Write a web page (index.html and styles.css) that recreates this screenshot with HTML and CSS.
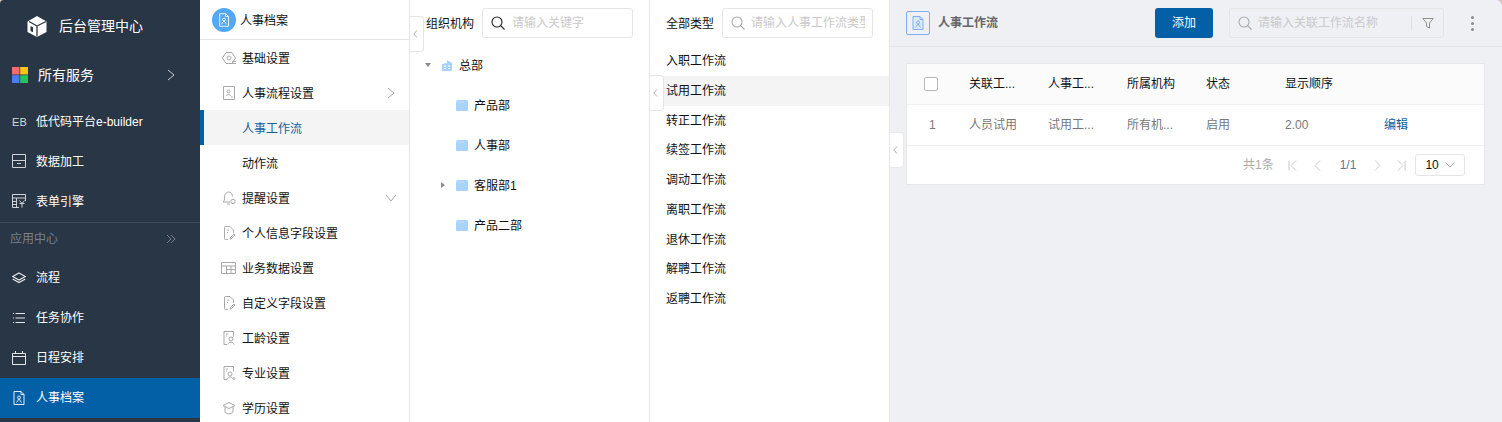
FILE: index.html
```html
<!DOCTYPE html>
<html lang="zh">
<head>
<meta charset="utf-8">
<title>人事工作流</title>
<link rel="stylesheet" href="styles.css">
</head>
<body>
<div class="app">
  <aside class="nav">
    <div class="brand">
      <svg class="brand-ico" viewBox="0 0 20 22"><path d="M10 .5 19.500 6v10.500L10 21.500.5 16.500V6z" fill="#fff"/><path d="M10 10.500 19 6M10 10.500V21M10 10.500 2 6" stroke="#283645" stroke-width="1.300" fill="none"/><path d="M3.500 10.500v5l2.500 1.300v-5z" fill="#283645"/></svg>
      <span>后台管理中心</span>
    </div>
    <div class="all">
      <svg class="all-ico" viewBox="0 0 16 16"><rect width="7.500" height="7.500" fill="#f56c6c"/><rect x="8.200" width="7.800" height="7.500" fill="#fcc419"/><rect y="8.200" width="7.500" height="7.800" fill="#4c7df0"/><rect x="8.200" y="8.200" width="7.800" height="7.800" fill="#22c55e"/></svg>
      <span class="all-text">所有服务</span>
      <svg class="chev" viewBox="0 0 8 12"><path d="M1 1l6 5-6 5" fill="none" stroke="#c8ced4" stroke-width="1"/></svg>
    </div>
    <div class="nav-item nav-first nt"><span class="eb">EB</span><span>低代码平台e-builder</span></div>
    <div class="nav-item nt">
      <svg class="ni" viewBox="0 0 14 14"><path d="M.5.500h13v13H.5zM.5 6.500h13M5 9.500h4" fill="none" stroke="#cfd3d8"/></svg>
      <span>数据加工</span>
    </div>
    <div class="nav-item nt">
      <svg class="ni" viewBox="0 0 14 14"><path d="M7 13.500H.5V.5h13V7M.5 4h13M4.500 4v9.500M.5 7.500h4M.5 10.500h4M7.500 6.500l2.500 3 2.500-3M7.500 9.500h5M10 9.500v4" fill="none" stroke="#cfd3d8"/></svg>
      <span>表单引擎</span>
    </div>
    <div class="nav-sec"><span>应用中心</span><svg class="dbl" viewBox="0 0 10 10"><path d="M1 1l4 4-4 4M5 1l4 4-4 4" fill="none" stroke="#79838e"/></svg></div>
    <div class="nav-item">
      <svg class="ni" viewBox="0 0 14 12"><path d="M7 1l6.300 3.500L7 8 .7 4.500zM.7 7l6.300 3.500L13.300 7" fill="none" stroke="#e6e9ec" stroke-width="1.100"/></svg>
      <span>流程</span>
    </div>
    <div class="nav-item">
      <svg class="ni" viewBox="0 0 14 14"><path d="M3.500 2.500H13M3.500 7H13M3.500 11.500H13M1 2.500h1M1 7h1M1 11.500h1" fill="none" stroke="#e6e9ec"/></svg>
      <span>任务协作</span>
    </div>
    <div class="nav-item">
      <svg class="ni" viewBox="0 0 14 14"><path d="M.5 2.500h13v11H.5zM.5 5.500h13M3.500 0v3M10.500 0v3" fill="none" stroke="#e6e9ec"/></svg>
      <span>日程安排</span>
    </div>
    <div class="nav-item on">
      <svg class="ni" viewBox="0 0 14 14"><path d="M2 .5h7l3 3v10H2zM9 .5v3h3" fill="none" stroke="#e6e9ec"/><circle cx="7" cy="6.500" r="1.500" fill="none" stroke="#e6e9ec"/><path d="M4.500 11.500 7 8l2.500 3.500" fill="none" stroke="#e6e9ec"/></svg>
      <span>人事档案</span>
    </div>
  </aside>

  <section class="menu">
    <div class="menu-head">
      <span class="avatar"><svg viewBox="0 0 14 16"><path d="M2 .7h7l3.300 3.300v11.300H2zM9 .7V4h3.300" fill="none" stroke="#fff"/><circle cx="7" cy="7.500" r="1.700" fill="none" stroke="#fff"/><path d="M4 13l3-4 3 4" fill="none" stroke="#fff"/></svg></span>
      <span class="head-text">人事档案</span>
    </div>
    <div class="menu-row"><svg class="mi" viewBox="0 0 14 14"><path d="M4 1.500h6l3.500 5.500-3.500 5.500H4L.5 7z" fill="none" stroke="#a8a8a8"/><circle cx="7" cy="7" r="2" fill="none" stroke="#a8a8a8"/><path d="M10 10.500h4M10 12.500h4" stroke="#a8a8a8"/></svg><span>基础设置</span></div>
    <div class="menu-row"><svg class="mi" viewBox="0 0 14 14"><path d="M1.500.5h11v13h-11z" fill="none" stroke="#a8a8a8"/><circle cx="6.500" cy="5.500" r="1.500" fill="none" stroke="#a8a8a8"/><path d="M4.500 10c.3-2 3.700-2 4 0M9 11h1.500" fill="none" stroke="#a8a8a8"/></svg><span>人事流程设置</span><svg class="arrow" viewBox="0 0 8 12"><path d="M1 1l6 5-6 5" fill="none" stroke="#a8a8a8"/></svg></div>
    <div class="menu-row sub cur"><span>人事工作流</span></div>
    <div class="menu-row sub"><span>动作流</span></div>
    <div class="menu-row"><svg class="mi" viewBox="0 0 14 14"><path d="M1 11c1.500-1 1.500-2.500 1.500-5C2.500 3 4.500 1 6.500 1s4 2 4 4.500M1 11h7M5 13h3" fill="none" stroke="#a8a8a8"/><circle cx="11" cy="10.500" r="2.200" fill="none" stroke="#a8a8a8"/></svg><span>提醒设置</span><svg class="arrow wide" viewBox="0 0 12 8"><path d="M1 1l5 6 5-6" fill="none" stroke="#a8a8a8"/></svg></div>
    <div class="menu-row"><svg class="mi" viewBox="0 0 14 14"><path d="M6 13.500H3.500a1 1 0 0 1-1-1v-11a1 1 0 0 1 1-1H8l3.500 3.500v3" fill="none" stroke="#a8a8a8"/><path d="M5 4h2M5 6.500h1M8 12l4-4 1 1-4 4H8z" fill="none" stroke="#a8a8a8"/></svg><span>个人信息字段设置</span></div>
    <div class="menu-row"><svg class="mi big" viewBox="0 0 15 12"><path d="M.5.500h14v11H.5zM.5 4h14M5.500 4v7.500M10 4v7.500M5.500 7.500h9" fill="none" stroke="#a8a8a8"/></svg><span>业务数据设置</span></div>
    <div class="menu-row"><svg class="mi" viewBox="0 0 14 14"><path d="M6 13.500H3.500a1 1 0 0 1-1-1v-11a1 1 0 0 1 1-1H8l3.500 3.500v3" fill="none" stroke="#a8a8a8"/><path d="M5 4h2M5 6.500h1M8 12l4-4 1 1-4 4H8z" fill="none" stroke="#a8a8a8"/></svg><span>自定义字段设置</span></div>
    <div class="menu-row"><svg class="mi" viewBox="0 0 14 14"><path d="M5 13.500H2V.5h9.500v5" fill="none" stroke="#a8a8a8"/><path d="M4 3h2M4 5h1" stroke="#a8a8a8"/><circle cx="9" cy="8" r="2" fill="none" stroke="#a8a8a8"/><path d="M6 13.500c.3-3 5.700-3 6 0" fill="none" stroke="#a8a8a8"/></svg><span>工龄设置</span></div>
    <div class="menu-row"><svg class="mi" viewBox="0 0 14 14"><path d="M5 13.500H2V.5h9.500v5" fill="none" stroke="#a8a8a8"/><path d="M4 3h2M4 5h1" stroke="#a8a8a8"/><circle cx="8" cy="8" r="2" fill="none" stroke="#a8a8a8"/><path d="M5.500 13.500c.3-3 3.700-3 5-1.500" fill="none" stroke="#a8a8a8"/><circle cx="12" cy="12.500" r="1" fill="none" stroke="#a8a8a8"/></svg><span>专业设置</span></div>
    <div class="menu-row"><svg class="mi" viewBox="0 0 14 14"><path d="M7 1.500l6 3-6 3-6-3zM3 6v5c2 2.500 6 2.500 8 0V6" fill="none" stroke="#a8a8a8"/></svg><span>学历设置</span></div>
  </section>

  <section class="org">
    <div class="pane-head">
      <span class="pane-title">组织机构</span>
      <div class="input org-input">
        <svg class="srch dark" viewBox="0 0 14 14"><circle cx="6" cy="6" r="5" fill="none" stroke="#222" stroke-width="1.100"/><path d="M9.700 9.700 13.500 13.500" stroke="#222" stroke-width="1.100"/></svg>
        <span class="ph">请输入关键字</span>
      </div>
    </div>
    <div class="tree">
      <div class="node root">
        <svg class="caret" viewBox="0 0 8 8"><path d="M1 2h6L4 6z" fill="#8a8a8a"/></svg>
        <svg class="bld" viewBox="0 0 12 11"><path d="M1 4l5-1V0l5 3v8H1z" fill="#a8d3ff"/><path d="M3 6h2M7 6h2M3 8.500h2M7 8.500h2" stroke="#fff"/></svg>
        <span>总部</span>
      </div>
      <div class="node"><svg class="fold" viewBox="0 0 12 11"><rect width="12" height="11" rx="1.500" fill="#a8d3ff"/><path d="M0 2h8" stroke="#c4e0fb"/></svg><span>产品部</span></div>
      <div class="node"><svg class="fold" viewBox="0 0 12 11"><rect width="12" height="11" rx="1.500" fill="#a8d3ff"/><path d="M0 2h8" stroke="#c4e0fb"/></svg><span>人事部</span></div>
      <div class="node has-caret"><svg class="caret side" viewBox="0 0 8 8"><path d="M2 1v6l4-3z" fill="#8a8a8a"/></svg><svg class="fold" viewBox="0 0 12 11"><rect width="12" height="11" rx="1.500" fill="#a8d3ff"/><path d="M0 2h8" stroke="#c4e0fb"/></svg><span>客服部1</span></div>
      <div class="node"><svg class="fold" viewBox="0 0 12 11"><rect width="12" height="11" rx="1.500" fill="#a8d3ff"/><path d="M0 2h8" stroke="#c4e0fb"/></svg><span>产品二部</span></div>
    </div>
    <button class="tab tab-org"><svg viewBox="0 0 5 8"><path d="M4 .5.800 4 4 7.500" fill="none" stroke="#aaa"/></svg></button>
  </section>

  <section class="types">
    <div class="pane-head">
      <span class="pane-title">全部类型</span>
      <div class="input type-input">
        <svg class="srch" viewBox="0 0 14 14"><circle cx="6" cy="6" r="5" fill="none" stroke="#aaa" stroke-width="1.100"/><path d="M9.700 9.700 13.500 13.500" stroke="#aaa" stroke-width="1.100"/></svg>
        <span class="ph clip">请输入人事工作流类型</span>
      </div>
    </div>
    <ul class="type-list">
      <li>入职工作流</li>
      <li class="sel">试用工作流</li>
      <li>转正工作流</li>
      <li>续签工作流</li>
      <li>调动工作流</li>
      <li>离职工作流</li>
      <li>退休工作流</li>
      <li>解聘工作流</li>
      <li>返聘工作流</li>
    </ul>
    <button class="tab tab-type"><svg viewBox="0 0 5 8"><path d="M4 .5.800 4 4 7.500" fill="none" stroke="#aaa"/></svg></button>
  </section>

  <main class="main">
    <header class="topbar">
      <span class="title-ico"><svg viewBox="0 0 12 14"><path d="M1 .5h7l3 3v10H1zM8 .5v3h3" fill="#dbe9fd" stroke="#7daef5"/><circle cx="6" cy="6.500" r="1.500" fill="none" stroke="#7daef5"/><path d="M3.500 11.500 6 8l2.500 3.500" fill="none" stroke="#7daef5"/></svg></span>
      <span class="title">人事工作流</span>
      <button class="add">添加</button>
      <div class="input top-input">
        <svg class="srch" viewBox="0 0 14 14"><circle cx="6" cy="6" r="5" fill="none" stroke="#aaa" stroke-width="1.100"/><path d="M9.700 9.700 13.500 13.500" stroke="#aaa" stroke-width="1.100"/></svg>
        <span class="ph grow">请输入关联工作流名称</span>
        <span class="vline"></span>
        <svg class="filter" viewBox="0 0 12 11"><path d="M.8.500h10.400L7.500 5v5l-3-1.500V5z" fill="none" stroke="#8f8f8f"/></svg>
      </div>
      <div class="dots"><i></i><i></i><i></i></div>
    </header>

    <div class="card">
      <div class="grid head">
        <div class="cell chk"><span class="box"></span></div>
        <div class="cell">关联工...</div>
        <div class="cell">人事工...</div>
        <div class="cell">所属机构</div>
        <div class="cell">状态</div>
        <div class="cell">显示顺序</div>
        <div class="cell"></div>
      </div>
      <div class="grid body">
        <div class="cell chk">1</div>
        <div class="cell">人员试用</div>
        <div class="cell">试用工...</div>
        <div class="cell">所有机...</div>
        <div class="cell">启用</div>
        <div class="cell">2.00</div>
        <div class="cell"><a class="link">编辑</a></div>
      </div>
      <div class="pager">
        <span class="total">共1条</span>
        <svg class="pg g1" viewBox="0 0 9 11"><path d="M1 .5v10M8 .5 3 5.500l5 5" fill="none" stroke="#c9c9c9"/></svg>
        <svg class="pg g2" viewBox="0 0 7 11"><path d="M6 .5 1 5.500l5 5" fill="none" stroke="#c9c9c9"/></svg>
        <span class="pnum">1/1</span>
        <svg class="pg g3" viewBox="0 0 7 11"><path d="M1 .5l5 5-5 5" fill="none" stroke="#c9c9c9"/></svg>
        <svg class="pg g4" viewBox="0 0 9 11"><path d="M8 .5v10M1 .5l5 5-5 5" fill="none" stroke="#c9c9c9"/></svg>
        <div class="size"><span>10</span><svg viewBox="0 0 10 6"><path d="M.5.500 5 5 9.500.500" fill="none" stroke="#aaa"/></svg></div>
      </div>
    </div>
    <button class="tab tab-main"><svg viewBox="0 0 5 8"><path d="M4 .5.800 4 4 7.500" fill="none" stroke="#aaa"/></svg></button>
  </main>
</div>
</body>
</html>
```

FILE: styles.css
```css
* { box-sizing: border-box; }
html, body { margin: 0; height: 100%; overflow: hidden; }
body {
  background: #cfc6bb;
  font: 12px/1.5 "Liberation Sans", "Noto Sans CJK SC", sans-serif;
  color: #111;
}
ul { list-style: none; margin: 0; padding: 0; }
button { font: inherit; border: 0; padding: 0; }
svg { display: block; flex: none; }

.app {
  display: flex;
  width: 1502px;
  height: 422px;
  overflow: hidden;
  border-radius: 4px 6px 0 0;
}

/* dark nav */
.nav { width: 200px; flex: none; background: #283645; color: #fff; }
.brand { display: flex; align-items: center; gap: 12px; height: 52px; padding-left: 27px; font-size: 14px; }
.brand-ico { width: 20px; height: 23px; }
.all { display: flex; align-items: center; height: 46px; padding-left: 12px; font-size: 14px; }
.all-ico { width: 16px; height: 16px; margin-top: -1px; }
.all-text { margin-left: 10px; }
.chev { width: 8px; height: 12px; margin-left: 73px; }
.nav-item { display: flex; align-items: center; gap: 10px; height: 40px; padding-left: 12px; }
.nav-first { margin-top: 3px; }
.nt > span { padding-top: 2px; }
.eb { width: 14px; font-size: 11px; line-height: 1; color: #d5d9dd; letter-spacing: .2px; white-space: nowrap; }
.ni { width: 14px; height: 14px; }
.nav-sec {
  display: flex; align-items: center; justify-content: space-between;
  height: 36px; margin-top: 1px; padding: 0 24px 3px 10px;
  border-top: 1px solid #3d4a59;
  color: #77818c;
}
.dbl { width: 10px; height: 10px; }
.nav-item.on { background: #0360a6; }

/* menu */
.menu { width: 210px; flex: none; background: #fff; border-right: 1px solid #e5e5e5; }
.menu-head { display: flex; align-items: center; gap: 4px; height: 40px; padding-left: 12px; border-bottom: 1px solid #e5e5e5; }
.head-text { padding-top: 2px; }
.avatar { display: flex; align-items: center; justify-content: center; width: 24px; height: 24px; border-radius: 50%; background: #52a8f2; }
.avatar svg { width: 12px; height: 14px; }
.menu-row { display: flex; align-items: center; height: 35px; padding-left: 22px; }
.menu-row > span { margin-left: 6px; padding-top: 3px; }
.mi { width: 14px; height: 14px; }
.mi.big { width: 15px; height: 12px; margin-left: -1px; }
.arrow { width: 8px; height: 12px; margin-left: auto; margin-right: 14px; }
.arrow.wide { width: 12px; height: 8px; margin-right: 12px; }
.sub { padding-left: 42px; }
.sub > span { margin-left: 0; }
.cur { background: #f4f4f4; color: #14609c; box-shadow: inset 4px 0 #0360a6; }

/* panes */
.org, .types { position: relative; width: 240px; flex: none; background: #fff; border-right: 1px solid #e5e5e5; }
.pane-head { display: flex; align-items: center; gap: 8px; height: 46px; padding: 0 16px; }
.pane-title { padding-top: 2px; }
.input { display: flex; align-items: center; height: 30px; border: 1px solid #e5e5e5; border-radius: 3px; padding-left: 8px; }
.org-input, .type-input { width: 151px; }
.srch { width: 14px; height: 14px; }
.ph { margin-left: 7px; color: #c9c9c9; white-space: nowrap; }
.clip { width: 114px; margin-left: 6px; overflow: hidden; }
.node { display: flex; align-items: center; height: 40px; padding-left: 36px; margin-left: 10px; }
.node > span { margin-left: 6px; padding-top: 2px; }
.root { padding-left: 4px; margin-top: -1px; }
.caret { width: 8px; height: 8px; }
.root .caret { margin-right: 9px; }
.bld { width: 12px; height: 11px; }
.fold { width: 12px; height: 11px; }
.has-caret { padding-left: 19px; }
.has-caret .caret { margin-right: 9px; }
.tab {
  position: absolute; display: flex; align-items: center; padding-left: 3px;
  width: 14px; height: 36px; background: #fff;
  border: 1px solid #e5e5e5; border-left: 0; border-radius: 0 4px 4px 0;
}
.tab svg { width: 5px; height: 8px; }
.tab-org { left: 0; top: 16px; }
.tab-type { left: 0; top: 75px; }
.tab-main { left: 0; top: 132px; border-color: #e8e9ed; }

.type-list li { height: 29.75px; line-height: 30px; padding-left: 16px; }
.sel { background: #f4f4f4; }

/* main */
.main { position: relative; flex: 1; min-width: 0; background: #eff0f4; }
.topbar { display: flex; align-items: center; height: 47px; padding: 0 0 0 16px; border-bottom: 1px solid #e5e6ea; }
.title-ico { display: flex; align-items: center; justify-content: center; width: 24px; height: 24px; border: 1px solid #7daef5; border-radius: 2px; }
.title-ico svg { width: 12px; height: 14px; }
.title { margin-left: 8px; font-weight: 700; color: #666; }
.add { margin-left: 157px; width: 58px; height: 30px; border-radius: 3px; background: #0360a6; color: #fff; }
.top-input { width: 215px; margin-left: 16px; background: #eff0f4; }
.top-input .ph { margin-left: 6px; }
.grow { flex: 1; }
.vline { width: 1px; height: 14px; background: #e0e1e5; margin-right: 10px; }
.filter { width: 12px; height: 11px; margin-right: 9px; }
.dots { display: flex; flex-direction: column; gap: 3px; margin-left: 27px; }
.dots i { display: block; width: 3px; height: 3px; border-radius: 50%; background: #8d8d8d; }

.card { width: 579px; height: 122px; margin: 16px 0 0 16px; background: #fff; border: 1px solid #e5e6ea; }
.grid { display: grid; grid-template-columns: 46px 79px 79px 79px 79px 99px 109px; }
.head { height: 41px; background: #fbfbfb; box-shadow: inset 0 -1px #f0f0f0; }
.body { height: 41px; color: #777; box-shadow: inset 0 -1px #f0f0f0; }
.cell { display: flex; align-items: center; height: 40px; padding-left: 16px; }
.chk { padding-left: 17px; }
.box { width: 14px; height: 14px; border: 1px solid #bbb; border-radius: 2px; background: #fff; }
.body .chk { padding-left: 22px; }
.link { color: #14609c; }
.pager { display: flex; align-items: center; height: 38px; padding-left: 336px; color: #aaa; }
.pg { height: 11px; }
.g1 { width: 9px; margin-left: 14px; }
.g2 { width: 7px; margin-left: 17px; }
.pnum { margin-left: 19px; color: #5f7890; }
.g3 { width: 7px; margin-left: 18px; }
.g4 { width: 9px; margin-left: 16px; }
.size { display: flex; align-items: center; justify-content: space-between; width: 50px; height: 22px; margin-left: 9px; padding: 0 9px; border: 1px solid #e5e5e5; border-radius: 3px; color: #111; }
.size svg { width: 10px; height: 6px; }
```
